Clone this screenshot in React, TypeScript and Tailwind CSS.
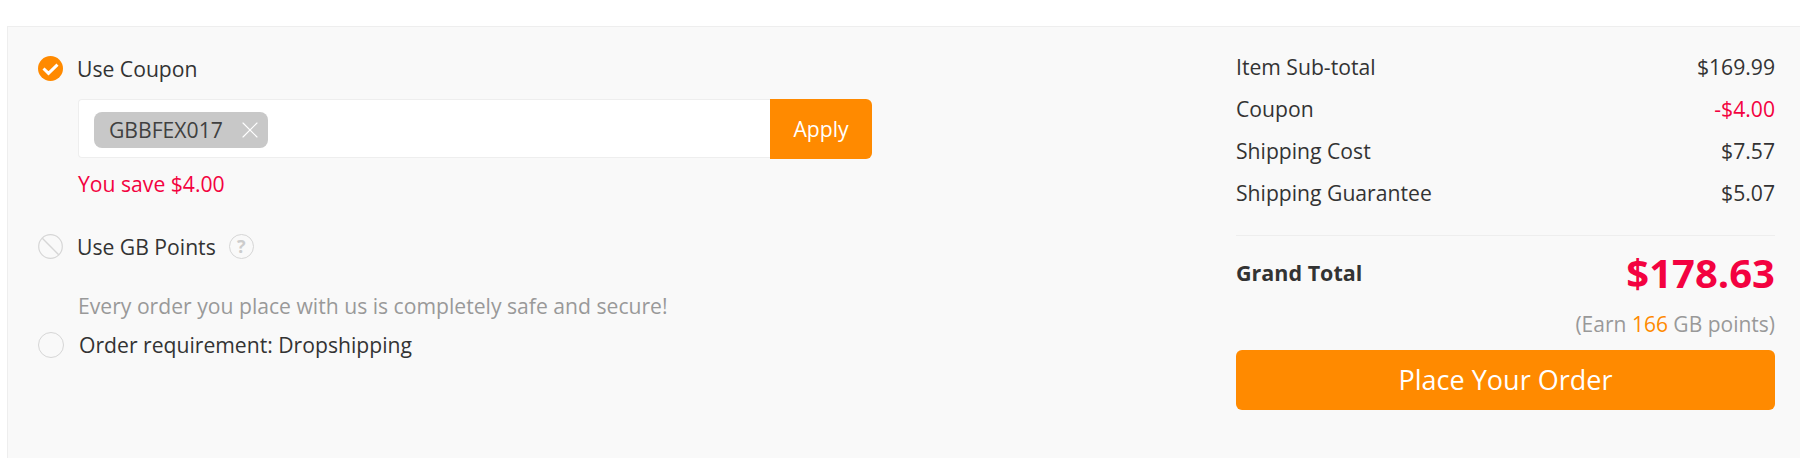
import { X } from "lucide-react";

const rows = [
    { label: "Item Sub-total", value: "$169.99", color: "text-[#333333]" },
    { label: "Coupon", value: "-$4.00", color: "text-[#f30240]" },
    { label: "Shipping Cost", value: "$7.57", color: "text-[#333333]" },
    { label: "Shipping Guarantee", value: "$5.07", color: "text-[#333333]" },
];

function CheckedIcon() {
    return (
        <svg width="25" height="25" viewBox="0 0 25 25" className="shrink-0">
            <circle cx="12.5" cy="12.5" r="12.5" fill="#ff8a00" />
            <path d="M5.5 12.5l5 4.8 9-8.6" fill="none" stroke="#ffffff" strokeWidth="3" />
        </svg>
    );
}

function DisabledIcon() {
    return (
        <svg width="25" height="25" viewBox="0 0 25 25" className="shrink-0">
            <circle cx="12.5" cy="12.5" r="11.8" fill="none" stroke="#d6d6d6" strokeWidth="1.2" />
            <path d="M4.3 4.3l16.4 16.4" fill="none" stroke="#d6d6d6" strokeWidth="1.4" />
        </svg>
    );
}

export default function App() {
    return (
        <div className="h-[458px] overflow-hidden bg-white pt-[26px] pl-[7px] font-['Open_Sans',sans-serif] text-[21.15px] text-[#333333]">
            <div className="flex h-[432px] justify-between border-t border-l border-[#eeeeee] bg-[#f9f9f9] pr-[25px]">
                {/* Left: coupon and points */}
                <div className="pt-[28px] pl-[30px]">
                    <div className="flex h-[27px] items-center gap-[14px]">
                        <CheckedIcon />
                        <span>Use Coupon</span>
                    </div>
                    <div className="mt-[17px] ml-[40px] flex h-[60px] w-[794px]">
                        <div className="h-[59px] w-[692px] rounded-l-[4px] border border-r-0 border-[#eeeeee] bg-white pt-[12px] pl-[15px]">
                            <div className="flex h-[36px] w-[174px] items-center justify-between rounded-[8px] bg-[#c8c8c8] pr-[4px] pl-[15px]">
                                <span className="text-[#404040]">GBBFEX017</span>
                                <X size={28} strokeWidth={1} className="text-white" />
                            </div>
                        </div>
                        <button className="h-[60px] w-[102px] rounded-r-[6px] bg-[#ff8a00] text-white">Apply</button>
                    </div>
                    <div className="mt-[11px] ml-[40px] h-[27px] leading-[27px] text-[#f30240]">You save $4.00</div>
                    <div className="mt-[36px] flex h-[27px] items-center">
                        <DisabledIcon />
                        <span className="ml-[14px]">Use GB Points</span>
                        <span className="ml-[13px] flex h-[25px] w-[25px] items-center justify-center rounded-full border border-[#d6d6d6] text-[18px] font-bold text-[#cccccc]">?</span>
                    </div>
                    <div className="mt-[32px] ml-[40px] h-[27px] leading-[27px] text-[#999999]">Every order you place with us is completely safe and secure!</div>
                    <div className="mt-[12px] flex h-[27px] items-center gap-[15px]">
                        <span className="h-[26px] w-[26px] shrink-0 rounded-full border border-[#d6d6d6]" />
                        <span>Order requirement: Dropshipping</span>
                    </div>
                </div>

                {/* Right: order totals */}
                <div className="w-[539px] pt-[26px]">
                    <div className="flex flex-col gap-[15px] border-b border-[#eeeeee] pb-[29px]">
                        {rows.map((row) => (
                            <div key={row.label} className="flex h-[27px] items-center justify-between">
                                <span>{row.label}</span>
                                <span className={row.color}>{row.value}</span>
                            </div>
                        ))}
                    </div>
                    <div className="mt-[15px] flex h-[44px] items-center justify-between">
                        <span className="text-[21.5px] font-bold">Grand Total</span>
                        <span className="text-[40px] font-bold text-[#f30240]">$178.63</span>
                    </div>
                    <div className="mt-[16px] h-[27px] text-right text-[21px] leading-[27px] text-[#999999]">
                        (Earn <span className="text-[#ff8a00]">166</span> GB points)
                    </div>
                    <button className="mt-[12px] h-[60px] w-full rounded-[6px] bg-[#ff8a00] text-[27px] text-white">Place Your Order</button>
                </div>
            </div>
        </div>
    );
}
